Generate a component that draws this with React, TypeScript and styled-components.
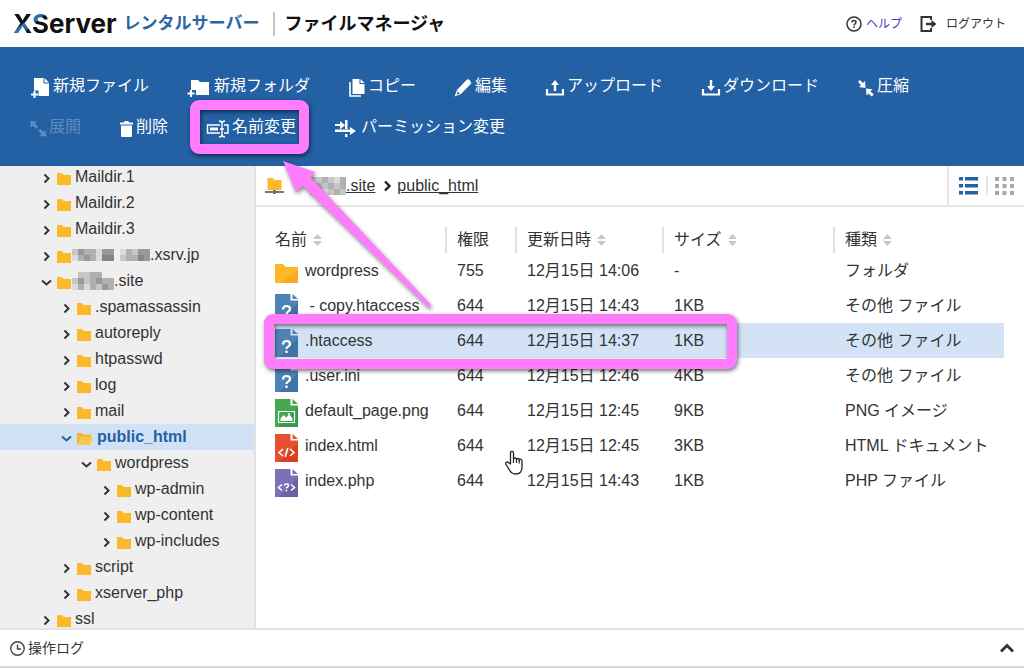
import React from "react";
import styled, { createGlobalStyle, css } from "styled-components";

const BLUE = "#2360a4";
const PINK = "#ff7dfc";
const FOLDER = "#fbb829";
const FONT = `"Liberation Sans", "Noto Sans CJK JP", sans-serif`;

const GlobalStyle = createGlobalStyle`
  * { box-sizing: border-box; }
  body { margin: 0; background: #fff; }
  button { font: inherit; color: inherit; background: none; border: 0; padding: 0; cursor: pointer; }
  svg { display: block; flex: none; }
`;

const Page = styled.div`
  position: relative;
  display: flex;
  flex-direction: column;
  height: 100vh;
  overflow: hidden;
  font-family: ${FONT};
  font-size: 16px;
  line-height: 24px;
  color: #333;
`;

/* Header */
const Header = styled.header`
  display: flex;
  flex: none;
  align-items: center;
  justify-content: space-between;
  height: 47px;
  padding: 0 18px 0 13px;
`;
const Brand = styled.h1`
  display: flex;
  align-items: center;
  margin: 0;
  font-size: 17px;
  line-height: 24px;
  color: #111;
`;
const Logo = styled.span`
  font-family: Inter, sans-serif;
  font-size: 26px;
  font-weight: 700;
`;
const LogoSwoosh = styled.span`
  color: transparent;
  background: linear-gradient(to bottom right, #111 38%, #3a74b4 40%, ${BLUE} 54%, #111 56%);
  background-clip: text;
`;
const Service = styled.span`
  margin-left: 7px;
  color: #2a66a8;
`;
const AppName = styled.span`
  display: flex;
  align-items: center;
  margin-left: 14px;
  padding-left: 9px;
  border-left: 2px solid #c4c4c4;
  font-size: 18px;
`;
const HeaderLinks = styled.nav`
  display: flex;
  align-items: center;
  gap: 18px;
  font-size: 12px;
`;
const HeaderLink = styled.a<{ $tone: string; $gap: number }>`
  display: flex;
  align-items: center;
  gap: ${(p) => p.$gap}px;
  color: ${(p) => p.$tone};
  text-decoration: none;
`;

/* Toolbar */
const Toolbar = styled.div`
  display: flex;
  flex: none;
  flex-wrap: wrap;
  gap: 17px 38px;
  padding: 27px 38px 27px 30px;
  background: ${BLUE};
  color: #fff;
`;
const ToolButton = styled.button`
  display: flex;
  align-items: center;
  height: 24px;
  white-space: nowrap;
  &:disabled { color: #5d8bc0; }
`;
const ToolIcon = styled.span<{ $w: number }>`
  width: ${(p) => p.$w}px;
  padding-top: 3px;
`;

/* Body */
const Body = styled.div`
  display: flex;
  flex: 1;
  min-height: 0;
`;
const Sidebar = styled.aside`
  flex: none;
  width: 256px;
  overflow: hidden;
  background: #efefef;
  border-right: 2px solid #e2e2e2;
`;
const Tree = styled.ul`
  margin: -2px 0 0;
  padding: 0;
  list-style: none;
`;
const TreeItem = styled.li<{ $level: number; $active?: boolean }>`
  display: flex;
  align-items: center;
  height: 26px;
  padding-left: ${(p) => 21 + p.$level * 20}px;
  ${(p) => p.$active && css`
    background: #d1e2f6;
    color: ${BLUE};
    font-weight: 700;
  `}
`;
const TreeToggle = styled.button`
  width: 16px;
  padding-top: 3px;
`;
const TreeLabel = styled.a<{ $masked: boolean }>`
  display: flex;
  align-items: center;
  gap: ${(p) => (p.$masked ? 1 : 4)}px;
  color: inherit;
  text-decoration: none;
`;
const TreeIcon = styled.span`
  padding-top: 3px;
`;
const MaskedName = styled.span`
  display: flex;
  align-items: center;
`;
const Main = styled.main`
  flex: 1;
  min-width: 0;
`;
const PathBar = styled.div`
  display: flex;
  align-items: stretch;
  justify-content: space-between;
  height: 41px;
  border-bottom: 2px solid #e6e6e6;
`;
const Crumbs = styled.nav`
  display: flex;
  align-items: center;
  padding-left: 9px;
`;
const Crumb = styled.a`
  display: flex;
  align-items: center;
  color: #333;
  text-decoration: underline;
`;
const ViewSwitch = styled.div`
  display: flex;
  align-items: center;
  padding: 0 10px;
  border-left: 2px solid #e6e6e6;
`;
const ViewButton = styled.button`
  & + & {
    margin-left: 8px;
    padding-left: 7px;
    border-left: 2px solid #e6e6e6;
  }
`;

/* File table */
const FileTable = styled.table`
  width: calc(100% - 39px);
  margin: 20px 20px 0 19px;
  border-collapse: collapse;
  table-layout: fixed;
`;
const HeadCell = styled.th<{ $w?: number }>`
  width: ${(p) => (p.$w ? p.$w + "px" : "auto")};
  height: 26px;
  padding: 0 0 0 10px;
  border-left: 2px solid #e2e2e2;
  font-weight: 400;
  text-align: left;
  &:first-child { padding-left: 0; border-left: 0; }
`;
const SortLabel = styled.button`
  display: flex;
  align-items: center;
  gap: 6px;
`;
const Row = styled.tr<{ $selected?: boolean }>`
  background: ${(p) => (p.$selected ? "#d3e3f5" : "transparent")};
`;
const Cell = styled.td`
  height: 35px;
  padding: 0 0 0 11px;
  white-space: nowrap;
  &:first-child { padding-left: 0; }
`;
const FileName = styled.span`
  display: flex;
  align-items: center;
  gap: 7px;
  white-space: pre;
`;
const FileIconBox = styled.span`
  padding-top: 4px;
`;

/* Footer */
const Footer = styled.footer`
  display: flex;
  flex: none;
  align-items: center;
  justify-content: space-between;
  height: 40px;
  padding: 0 10px;
  border-top: 2px solid #e2e2e2;
  border-bottom: 2px solid #d8d8d8;
  font-size: 14px;
`;
const LogButton = styled.button`
  display: flex;
  align-items: center;
  gap: 3px;
`;

/* Annotations over the page */
const Frame = styled.div<{ $x: number; $y: number; $w: number; $h: number }>`
  position: absolute;
  left: ${(p) => p.$x}px;
  top: ${(p) => p.$y}px;
  width: ${(p) => p.$w}px;
  height: ${(p) => p.$h}px;
  border: 10px solid ${PINK};
  border-radius: 9px;
  filter: drop-shadow(1px 2px 2px rgba(0, 0, 0, 0.55));
  pointer-events: none;
`;
const Arrow = styled.svg`
  position: absolute;
  left: 276px;
  top: 156px;
  filter: drop-shadow(1px 2px 2px rgba(0, 0, 0, 0.5));
  pointer-events: none;
`;
const Pointer = styled.svg`
  position: absolute;
  left: 504px;
  top: 450px;
  pointer-events: none;
`;

/* Icons */
const icons: Record<string, React.ReactNode> = {
  newFile: (
    <svg width="20" height="21" viewBox="0 0 20 21" fill="currentColor">
      <path d="M4 1h9.500v5.500H19V19H8.500v-5.500H4zM14.500 1L19 5.500h-4.500z" />
      <path d="M4.500 14v7M1 17.500h7" stroke="currentColor" strokeWidth="2" fill="none" />
    </svg>
  ),
  newFolder: (
    <svg width="23" height="18" viewBox="0 0 23 18" fill="currentColor">
      <path d="M4 1h7l2 2h9v13H9v-5H4z" />
      <path d="M4 11v7M.500 14.500h7" stroke="currentColor" strokeWidth="2" fill="none" />
    </svg>
  ),
  copy: (
    <svg width="18" height="19" viewBox="0 0 18 19" fill="currentColor">
      <path d="M4.500 1h7v5h5v10h-12zM12.500 1l4 4h-4z" />
      <path d="M2 4v14h11" fill="none" stroke="currentColor" strokeWidth="1.600" />
    </svg>
  ),
  edit: (
    <svg width="18" height="19" viewBox="0 0 18 19" fill="currentColor">
      <path fillRule="evenodd" d="M12.500 2q1.500-1.500 3.500.5t.8 3.500L7 16l-6.500 2.500L3 12zM3.800 13.500l-1.300 3.200 3.200-1.200z" />
    </svg>
  ),
  upload: (
    <svg width="20" height="17" viewBox="0 0 20 17" fill="currentColor">
      <path d="M10 1l4 5h-2.800v6H8.800V6H6z" />
      <path d="M2 10v5.500h16V10" fill="none" stroke="currentColor" strokeWidth="2.200" />
    </svg>
  ),
  download: (
    <svg width="20" height="17" viewBox="0 0 20 17" fill="currentColor">
      <path d="M10 12l4-5h-2.800V1H8.800v6H6z" />
      <path d="M2 10v5.500h16V10" fill="none" stroke="currentColor" strokeWidth="2.200" />
    </svg>
  ),
  compress: (
    <svg width="18" height="18" viewBox="0 0 18 18" fill="currentColor">
      <path d="M8.500 9L8 2 6 4 2.800 1 1 2.800 4 6 2 8zM9 9.500l.500 7 2-2 3.200 3 2-2-3.200-3.200 2-2z" />
    </svg>
  ),
  expand: (
    <svg width="17" height="17" viewBox="0 0 17 17" fill="currentColor">
      <path d="M0 1l7 .5-2 2L8.200 6.800 6.200 8.800 3 5.500l-2 2zM16.500 16.500l-7-.5 2-2-3.200-3.300 2-2L13.500 12l2-2z" />
    </svg>
  ),
  trash: (
    <svg width="15" height="17" viewBox="0 0 15 17" fill="currentColor">
      <path d="M1 2.500h4l.7-1.500h3.600l.7 1.500h4V4.500H1zM2 5.500h11V16q0 1-1 1H3q-1 0-1-1z" />
    </svg>
  ),
  rename: (
    <svg width="24" height="18" viewBox="0 0 24 18" fill="none" stroke="currentColor" strokeWidth="1.400">
      <path d="M14 5H1.500v8H14M18 5h4v8h-4M13 1q3 0 3 2.500v11Q16 17 13 17M19 1q-3 0-3 2.500M19 17q-3 0-3-2.500M14 9h4" />
      <path d="M4 9h8" strokeWidth="3" />
    </svg>
  ),
  permission: (
    <svg width="23" height="17" viewBox="0 0 23 17" fill="currentColor">
      <path d="M1 4h5V1l5 4.200-5 4.200V6H1zM1 9.500h15V7l6 4-6 4v-3H1zM11 0h2.500v9H11zM11 14h2.500v3H11z" />
    </svg>
  ),
};

const Chevron = ({ dir }: { dir: "right" | "down" }) => (
  <svg width="11" height="11" viewBox="0 0 11 11" fill="none" stroke="currentColor" strokeWidth="2">
    {dir === "right" ? <path d="M3.500 1.500l4 4-4 4" /> : <path d="M1 3.500l4.500 4 4.500-4" />}
  </svg>
);

const FolderIcon = ({ open }: { open?: boolean }) =>
  open ? (
    <svg width="16" height="13" viewBox="0 0 16 13">
      <path d="M0 12V1h5l1.500 1.500H14V5H4L1 12z" fill="#f7b52c" />
      <path d="M4 5h12l-2.500 8H0z" fill="#fcc650" />
    </svg>
  ) : (
    <svg width="14" height="12" viewBox="0 0 14 12">
      <path d="M0 0h5l1.500 2H14v10H0z" fill={FOLDER} />
    </svg>
  );

/* Pixelated block that hides part of a name; one digit of grey per tile. */
const MASK_TONES = ["#efefef", "#dadada", "#c6c6c6", "#b0b0b0", "#999", "#858585"];
const Mask = ({ rows }: { rows: string[] }) => {
  const tile = 6;
  return (
    <svg width={rows[0].length * tile} height={rows.length * tile} shapeRendering="crispEdges" aria-hidden="true">
      {rows.map((row, y) =>
        [...row].map((tone, x) =>
          tone === "0" ? null : (
            <rect key={`${x}-${y}`} x={x * tile} y={y * tile} width={tile} height={tile} fill={MASK_TONES[Number(tone)]} />
          ),
        ),
      )}
    </svg>
  );
};

const SortIcon = () => (
  <svg width="9" height="12" viewBox="0 0 9 12" fill="#c6c6c6">
    <path d="M4.500 0L9 5H0zM4.500 12L0 7h9z" />
  </svg>
);

type Kind = "folder" | "unknown" | "image" | "html" | "php";
const kindColors: Record<Kind, [string, string]> = {
  folder: [FOLDER, "#f6aa22"],
  unknown: ["#4f83b5", "#3f74a8"],
  image: ["#43a850", "#35984a"],
  html: ["#e5502f", "#d8401f"],
  php: ["#7d70b4", "#6b5fa6"],
};
const FileIcon = ({ kind }: { kind: Kind }) => {
  const [light, dark] = kindColors[kind];
  if (kind === "folder") {
    return (
      <svg width="23" height="20" viewBox="0 0 23 20">
        <path d="M0 1h8l3 3h12v16H0z" fill={light} />
        <path d="M23 7v13H5z" fill={dark} />
      </svg>
    );
  }
  return (
    <svg width="23" height="28" viewBox="0 0 23 28">
      <path d="M0 0h15.500v6.500H23V28H0z" fill={light} />
      <path d="M23 9v19H4z" fill={dark} />
      <path d="M17.500 0L23 5h-5.500z" fill={light} />
      {kind === "unknown" && (
        <path d="M8 15.500q0-3.500 3.500-3.500t3.500 3q0 1.500-1.800 2.600Q11.500 18.600 11.500 20M11.500 21.500v2.500" fill="none" stroke="#fff" strokeWidth="2.200" />
      )}
      {kind === "image" && (
        <>
          <path d="M3.500 12.500h16v11h-16z" fill="none" stroke="#fff" strokeWidth="1.200" />
          <path d="M5.500 22v-2.500l3-3.500 2.500 2.500 3.500-3 3 4V22z" fill="#fff" />
          <circle cx="14" cy="15" r="1" fill="#fff" />
        </>
      )}
      {kind === "html" && (
        <path d="M8 15l-4 3.500L8 22M15 15l4 3.500-4 3.500M12.800 14l-2.600 9" fill="none" stroke="#fff" strokeWidth="1.600" />
      )}
      {kind === "php" && (
        <>
          <path d="M7 15.500l-3.500 3L7 21.500M16 15.500l3.500 3-3.500 3" fill="none" stroke="#fff" strokeWidth="1.600" />
          <path d="M9.500 16.500q0-1.500 2-1.500t2 1.500q0 1-2 2.300v.7M11.500 20.800v1.700" fill="none" stroke="#fff" strokeWidth="1.500" />
        </>
      )}
    </svg>
  );
};

/* Data */
const tools = [
  { icon: "newFile", w: 23, label: "新規ファイル" },
  { icon: "newFolder", w: 27, label: "新規フォルダ" },
  { icon: "copy", w: 20, label: "コピー" },
  { icon: "edit", w: 21, label: "編集" },
  { icon: "upload", w: 22, label: "アップロード" },
  { icon: "download", w: 22, label: "ダウンロード" },
  { icon: "compress", w: 20, label: "圧縮" },
  { icon: "expand", w: 19, label: "展開", disabled: true },
  { icon: "trash", w: 17, label: "削除" },
  { icon: "rename", w: 26, label: "名前変更" },
  { icon: "permission", w: 27, label: "パーミッション変更" },
];

type Node = { name: string; level: number; open?: boolean; active?: boolean; mask?: string[] };
const tree: Node[] = [
  { name: "Maildir.1", level: 1 },
  { name: "Maildir.2", level: 1 },
  { name: "Maildir.3", level: 1 },
  { name: ".xsrv.jp", level: 1, mask: ["2433144013244", "1343155023354"] },
  { name: ".site", level: 1, open: true, mask: ["0223300", "2423433", "1313243"] },
  { name: ".spamassassin", level: 2 },
  { name: "autoreply", level: 2 },
  { name: "htpasswd", level: 2 },
  { name: "log", level: 2 },
  { name: "mail", level: 2 },
  { name: "public_html", level: 2, open: true, active: true },
  { name: "wordpress", level: 3, open: true },
  { name: "wp-admin", level: 4 },
  { name: "wp-content", level: 4 },
  { name: "wp-includes", level: 4 },
  { name: "script", level: 2 },
  { name: "xserver_php", level: 2 },
  { name: "ssl", level: 1 },
];

const columns = [
  { label: "名前", w: 171, sortable: true },
  { label: "権限", w: 70 },
  { label: "更新日時", w: 147, sortable: true },
  { label: "サイズ", w: 171, sortable: true },
  { label: "種類", sortable: true },
];

const files: { kind: Kind; name: string; mode: string; date: string; size: string; type: string; selected?: boolean }[] = [
  { kind: "folder", name: "wordpress", mode: "755", date: "12月15日 14:06", size: "-", type: "フォルダ" },
  { kind: "unknown", name: " - copy.htaccess", mode: "644", date: "12月15日 14:43", size: "1KB", type: "その他 ファイル" },
  { kind: "unknown", name: ".htaccess", mode: "644", date: "12月15日 14:37", size: "1KB", type: "その他 ファイル", selected: true },
  { kind: "unknown", name: ".user.ini", mode: "644", date: "12月15日 12:46", size: "4KB", type: "その他 ファイル" },
  { kind: "image", name: "default_page.png", mode: "644", date: "12月15日 12:45", size: "9KB", type: "PNG イメージ" },
  { kind: "html", name: "index.html", mode: "644", date: "12月15日 12:45", size: "3KB", type: "HTML ドキュメント" },
  { kind: "php", name: "index.php", mode: "644", date: "12月15日 14:43", size: "1KB", type: "PHP ファイル" },
];

export default function App() {
  return (
    <Page>
      <GlobalStyle />
      <Header>
        <Brand>
          <Logo>
            <LogoSwoosh>XS</LogoSwoosh>erver
          </Logo>
          <Service>レンタルサーバー</Service>
          <AppName>ファイルマネージャ</AppName>
        </Brand>
        <HeaderLinks>
          <HeaderLink href="#help" $tone="#4a3fc4" $gap={4}>
            <svg width="16" height="16" viewBox="0 0 16 16" fill="none" stroke="#333" strokeWidth="1.500">
              <circle cx="8" cy="8" r="7" />
              <path d="M6 6.500q0-2 2-2t2 1.800q0 .9-1 1.500T8 9.500M8 10.500v1.500" />
            </svg>
            ヘルプ
          </HeaderLink>
          <HeaderLink href="#logout" $tone="#333" $gap={9}>
            <svg width="17" height="16" viewBox="0 0 17 16" fill="none" stroke="#333" strokeWidth="2">
              <path d="M11 4V1H1.500v14H11v-3" />
              <path d="M6 8h6" strokeWidth="2.500" />
              <path d="M11.500 4l5 4-5 4z" fill="#333" stroke="none" />
            </svg>
            ログアウト
          </HeaderLink>
        </HeaderLinks>
      </Header>

      <Toolbar role="toolbar">
        {tools.map((t) => (
          <ToolButton key={t.icon} disabled={t.disabled}>
            <ToolIcon $w={t.w}>{icons[t.icon]}</ToolIcon>
            {t.label}
          </ToolButton>
        ))}
      </Toolbar>

      <Body>
        <Sidebar>
          <Tree>
            {tree.map((n) => (
              <TreeItem key={n.name + n.level} $level={n.level} $active={n.active}>
                <TreeToggle aria-label={n.open ? "閉じる" : "開く"}>
                  <Chevron dir={n.open ? "down" : "right"} />
                </TreeToggle>
                <TreeLabel href="#folder" $masked={Boolean(n.mask)}>
                  <TreeIcon>
                    <FolderIcon open={n.active} />
                  </TreeIcon>
                  <MaskedName>
                    {n.mask && <Mask rows={n.mask} />}
                    {n.name}
                  </MaskedName>
                </TreeLabel>
              </TreeItem>
            ))}
          </Tree>
        </Sidebar>

        <Main>
          <PathBar>
            <Crumbs>
              <Crumb href="#root" aria-label="ルート">
                <svg width="19" height="16" viewBox="0 0 19 16">
                  <path d="M2.500 0h5l2 2h7v10h-14z" fill={FOLDER} />
                  <path d="M0 13h19v2H0z" fill="#777" />
                  <path d="M8 12h3v4H8z" fill="#777" />
                </svg>
              </Crumb>
              <svg width="20" height="11" viewBox="0 0 20 11" fill="none" stroke="#222" strokeWidth="2.200">
                <path d="M12.500 1.500l4 4-4 4" />
              </svg>
              <Crumb href="#site">
                <Mask rows={["0223213", "0232323", "0231232"]} />
                <span>.site</span>
              </Crumb>
              <svg width="22" height="12" viewBox="0 0 22 12" fill="none" stroke="#222" strokeWidth="2.400">
                <path d="M10 1.500l4.500 4.500-4.500 4.500" />
              </svg>
              <Crumb href="#public_html">public_html</Crumb>
            </Crumbs>
            <ViewSwitch>
              <ViewButton aria-label="リスト表示">
                <svg width="19" height="19" viewBox="0 0 19 19" fill={BLUE}>
                  {[1, 8, 15].map((y) => (
                    <path key={y} d={`M0 ${y}h4v3.500H0zM6 ${y}h13v3.500H6z`} />
                  ))}
                </svg>
              </ViewButton>
              <ViewButton aria-label="アイコン表示">
                <svg width="19" height="19" viewBox="0 0 19 19" fill="#a8a8a8">
                  {[1, 8, 15].map((y) => (
                    <path key={y} d={`M0 ${y}h4v4H0zM7.500 ${y}h4v4h-4zM15 ${y}h4v4h-4z`} />
                  ))}
                </svg>
              </ViewButton>
            </ViewSwitch>
          </PathBar>

          <FileTable>
            <thead>
              <tr>
                {columns.map((c) => (
                  <HeadCell key={c.label} $w={c.w}>
                    {c.sortable ? (
                      <SortLabel>
                        {c.label}
                        <SortIcon />
                      </SortLabel>
                    ) : (
                      c.label
                    )}
                  </HeadCell>
                ))}
              </tr>
            </thead>
            <tbody>
              {files.map((f) => (
                <Row key={f.name} $selected={f.selected}>
                  <Cell>
                    <FileName>
                      <FileIconBox>
                        <FileIcon kind={f.kind} />
                      </FileIconBox>
                      {f.name}
                    </FileName>
                  </Cell>
                  <Cell>{f.mode}</Cell>
                  <Cell>{f.date}</Cell>
                  <Cell>{f.size}</Cell>
                  <Cell>{f.type}</Cell>
                </Row>
              ))}
            </tbody>
          </FileTable>
        </Main>
      </Body>

      <Footer>
        <LogButton>
          <svg width="15" height="15" viewBox="0 0 15 15" fill="none" stroke="#444" strokeWidth="1.400">
            <circle cx="7.500" cy="7.500" r="6.700" />
            <path d="M7.500 3.500v4.500H11" />
          </svg>
          操作ログ
        </LogButton>
        <button aria-label="ログを開く">
          <svg width="14" height="10" viewBox="0 0 14 10" fill="none" stroke="#333" strokeWidth="2.800">
            <path d="M1 8.500l6-6 6 6" />
          </svg>
        </button>
      </Footer>

      <Arrow width="164" height="160" viewBox="276 156 164 160">
        <path d="M283 161L315 172l-4 6L431 305l-2 3L303 186l-7 6z" fill={PINK} />
      </Arrow>
      <Frame $x={190} $y={100} $w={119} $h={54} />
      <Frame $x={264} $y={314} $w={473} $h={55} />
      <Pointer width="20" height="26" viewBox="0 0 20 26">
        <path
          d="M6.500 14V3q0-1.700 1.500-1.700T9.500 3v6q0-1 1.500-1t1.500 1.500q0-1 1.300-1t1.400 1.500q0-.8 1.400-.8t1.400 2V17q0 7-6.500 7-4 0-6-4l-3.500-5.500q-.8-1.500.4-2.200t2.200.4z"
          fill="#fff"
          stroke="#222"
          strokeWidth="1.300"
          strokeLinejoin="round"
        />
        <path d="M9.500 9v4M12.500 9.500v3.500M15.200 10v3.500" stroke="#222" strokeWidth="1.200" />
      </Pointer>
    </Page>
  );
}
